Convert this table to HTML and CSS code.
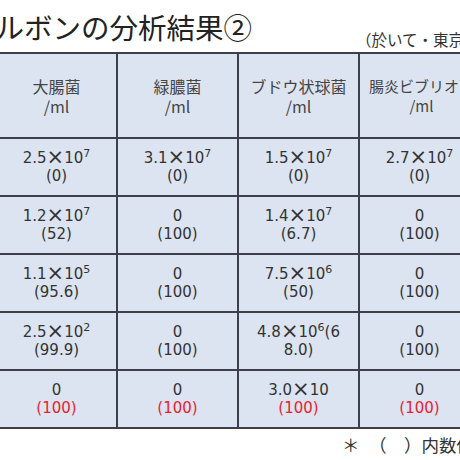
FILE: index.html
```html
<!DOCTYPE html>
<html lang="ja">
<head>
<meta charset="utf-8">
<link rel="stylesheet" href="styles.css">
</head>
<body>
<div class="page">
  <div class="head">
    <h1 class="title">カルボンの分析結果②</h1>
    <div class="sub">（於いて・東京都衛生研究所）</div>
  </div>
  <div class="grid">
    <div class="cell hd"><div>大腸菌<br>/ml</div></div>
    <div class="cell hd"><div>緑膿菌<br>/ml</div></div>
    <div class="cell hd"><div>ブドウ状球菌<br>/ml</div></div>
    <div class="cell hd hd-narrow"><div>腸炎ビブリオ菌<br>/ml</div></div>

    <div class="cell"><div>2.5<span class="x">×</span>10<span class="sup">7</span><br>(0)</div></div>
    <div class="cell"><div>3.1<span class="x">×</span>10<span class="sup">7</span><br>(0)</div></div>
    <div class="cell"><div>1.5<span class="x">×</span>10<span class="sup">7</span><br>(0)</div></div>
    <div class="cell"><div>2.7<span class="x">×</span>10<span class="sup">7</span><br>(0)</div></div>

    <div class="cell"><div>1.2<span class="x">×</span>10<span class="sup">7</span><br>(52)</div></div>
    <div class="cell"><div>0<br>(100)</div></div>
    <div class="cell"><div>1.4<span class="x">×</span>10<span class="sup">7</span><br>(6.7)</div></div>
    <div class="cell"><div>0<br>(100)</div></div>

    <div class="cell"><div>1.1<span class="x">×</span>10<span class="sup">5</span><br>(95.6)</div></div>
    <div class="cell"><div>0<br>(100)</div></div>
    <div class="cell"><div>7.5<span class="x">×</span>10<span class="sup">6</span><br>(50)</div></div>
    <div class="cell"><div>0<br>(100)</div></div>

    <div class="cell"><div>2.5<span class="x">×</span>10<span class="sup">2</span><br>(99.9)</div></div>
    <div class="cell"><div>0<br>(100)</div></div>
    <div class="cell"><div>4.8<span class="x">×</span>10<span class="sup">6</span>(6<br>8.0)</div></div>
    <div class="cell"><div>0<br>(100)</div></div>

    <div class="cell"><div>0<br><span class="red">(100)</span></div></div>
    <div class="cell"><div>0<br><span class="red">(100)</span></div></div>
    <div class="cell"><div>3.0<span class="x">×</span>10<br><span class="red">(100)</span></div></div>
    <div class="cell"><div>0<br><span class="red">(100)</span></div></div>
  </div>
  <div class="note"><span class="ast">＊</span>（　）内数値は除去率（％）</div>
</div>
</body>
</html>
```

FILE: styles.css
```css
html, body {
  margin: 0;
  padding: 0;
  background: #ffffff;
}
body {
  width: 460px;
  height: 460px;
  overflow: hidden;
}
.page {
  width: 460px;
  overflow: hidden;
}
.head {
  height: 52px;
  display: flex;
  align-items: flex-end;
  white-space: nowrap;
}
.title {
  margin: 0 0 0 -33px;
  font-family: "Noto Sans CJK JP", sans-serif;
  font-weight: normal;
  font-size: 28.5px;
  line-height: 40px;
  height: 45px;
  color: #222222;
  flex: none;
}
.sub {
  margin-left: 104px;
  margin-bottom: 4px;
  font-family: "Noto Sans CJK JP", sans-serif;
  font-size: 15.5px;
  line-height: 18px;
  color: #333333;
  flex: none;
}
.grid {
  display: grid;
  grid-template-columns: 119px 119px 119px 119px;
  grid-template-rows: 83px 56px 56px 56px 56px 56px;
  gap: 2px;
  padding: 2px 0;
  margin-left: -3px;
  width: 482px;
  background: #3b404b;
}
.cell {
  background: #dce4f2;
  display: flex;
  flex-direction: column;
  justify-content: center;
  text-align: center;
  font-family: "DejaVu Sans", "Noto Sans CJK JP", sans-serif;
  font-size: 15px;
  line-height: 18px;
  color: #333333;
  white-space: nowrap;
}
.cell.hd {
  font-family: "Noto Sans CJK JP", sans-serif;
  font-size: 16px;
  line-height: 20px;
  color: #444444;
}
.cell.hd-narrow {
  font-size: 15px;
  padding-left: 4px;
}
.x {
  font-size: 21px;
  line-height: 0;
  position: relative;
  top: 1px;
}
.sup {
  font-size: 11px;
  line-height: 0;
  position: relative;
  top: -6px;
}
.red {
  color: #e8222c;
}
.note {
  padding-left: 342px;
  margin-top: 6px;
  font-family: "Noto Sans CJK JP", sans-serif;
  font-size: 17.5px;
  line-height: 20px;
  color: #333333;
  white-space: nowrap;
}
.ast {
  display: inline-block;
  width: 27px;
}
```
